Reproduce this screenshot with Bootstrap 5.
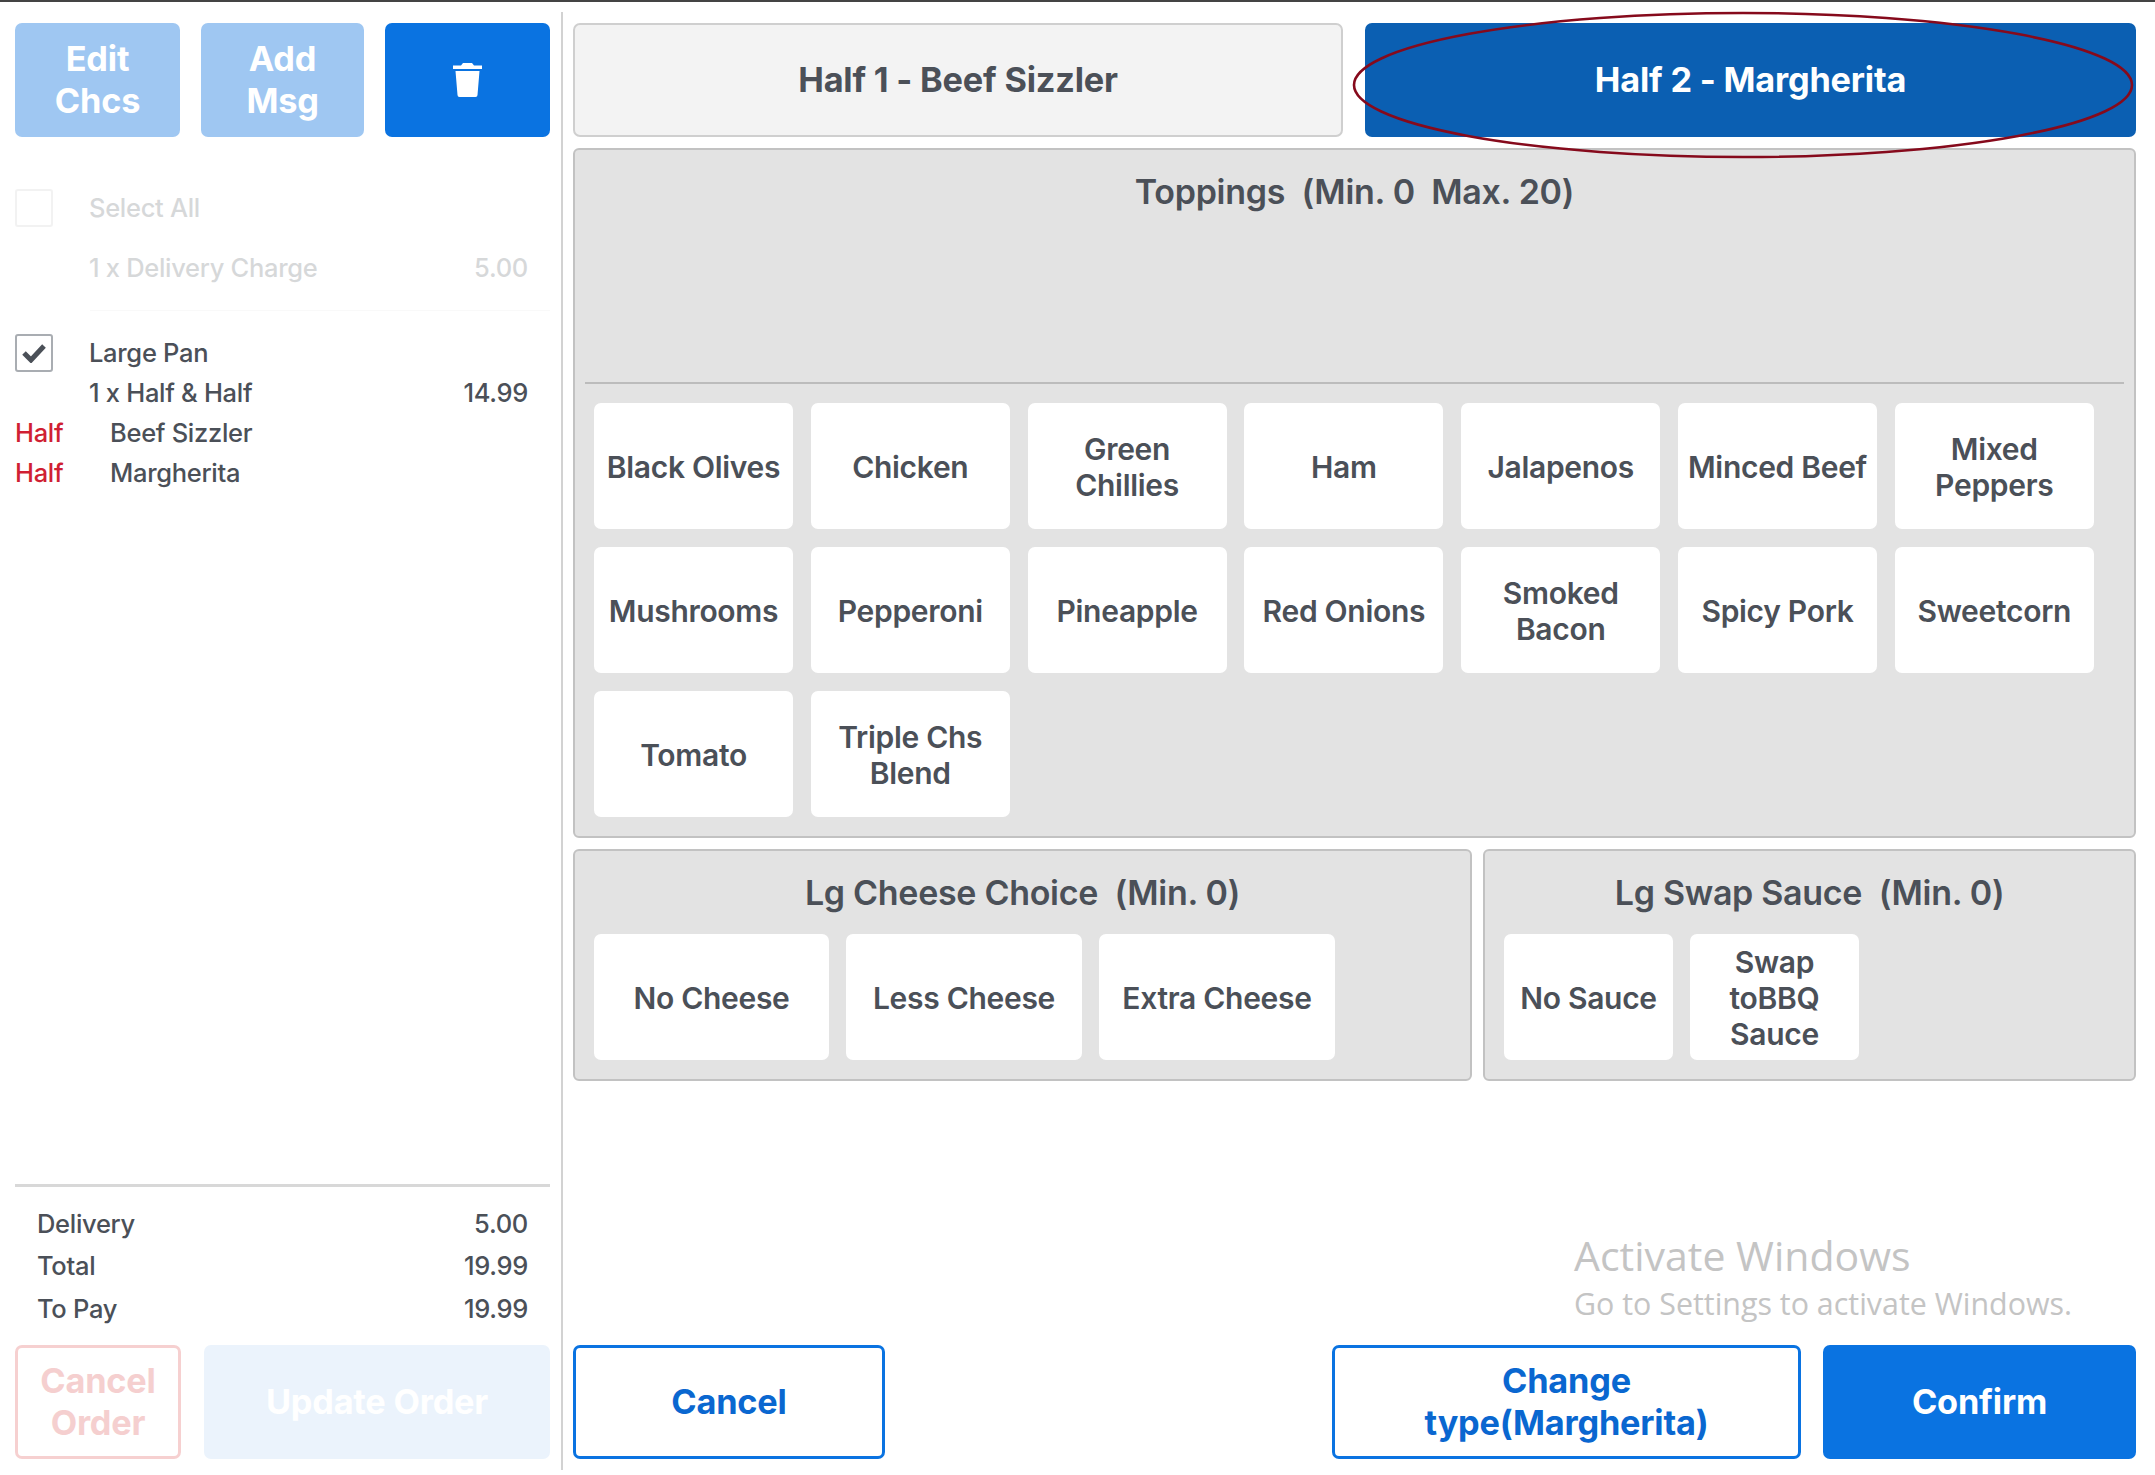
<!DOCTYPE html>
<html lang="en">
<head>
<meta charset="utf-8">
<title>Half and half</title>
<link href="https://cdn.jsdelivr.net/npm/bootstrap@5.3.0/dist/css/bootstrap.min.css" rel="stylesheet">
<style>
html,body{height:1475px;overflow:hidden}
body{font-family:Inter,"Liberation Sans",sans-serif;color:#4b5058;background:#fff;border-top:2px solid #444}
.shell{height:1473px;padding:10px 0 5px 0}
.side{width:563px;flex:none;padding:11px 11px 11px 15px;border-right:2px solid #d2d2d2}
.mainp{flex:1;padding:11px 19px 11px 10px;position:relative}
.pos-btn{font-family:Inter,sans-serif;font-weight:700;font-size:34.300px;line-height:42px;height:114px;border-radius:7px;padding:0 10px;display:flex;align-items:center;justify-content:center;text-align:center;letter-spacing:-.2px}
.b-blue{background:#0a73e1;border:0;color:#fff}
.b-light{background:#9fc7f2;border:0;color:#fff}
.b-outline{background:#fff;border:3px solid #0a73e1;color:#0a67d0}
.b-pale{background:#ebf3fc;border:0;color:#fff}
.b-danger-pale{background:#fff;border:3px solid #f6d0d0;color:#f5cfcf}
.b-half1{background:#f3f3f3;border:2px solid #cfcfcf;color:#4b5058}
.b-half2{background:#0b5fb2;border:0;color:#fff}
.w-edit{width:165px}.w-add{width:163px}.w-del{width:165px}
.t-row{font-size:25.5px;font-weight:500;line-height:40px;letter-spacing:-.3px}
.ghost{opacity:.22}
.chk{width:38px;height:38px;border:2px solid #a9adb2;border-radius:3px;flex:none;display:flex;align-items:center;justify-content:center;background:#fff}
.chk-off{border-color:#c8c8c8}
.red{color:#d01f33;width:95px;flex:none}
.rule-faint{height:1px;background:#f9f9f9;margin:0 0 0 75px}
.sum-rule{border-top:3px solid #d8d8d8}
.sum{padding:16px 22px 15px 22px}
.sum-row{font-size:25.5px;font-weight:500;line-height:42.5px;letter-spacing:-.3px}
.panel{background:#e3e3e3;border:2px solid #c2c2c2;border-radius:6px}
.p-top{height:690px;padding:0 10px}
.p-head{height:234px;border-bottom:2px solid #bcbcbc}
.p-title{font-size:34px;font-weight:600;line-height:42px;text-align:center;letter-spacing:-.3px;white-space:pre;padding-top:21px}
.tops{display:grid;grid-template-columns:repeat(7,199px);column-gap:17.8px;row-gap:18px;padding:19px 0 0 9px}
.tile{background:#fff;border:0;border-radius:7px;height:126px;font-weight:600;font-size:30px;line-height:36px;color:#4b5058;display:flex;align-items:center;justify-content:center;text-align:center;padding:2px 6px 0;letter-spacing:-.3px}
.p-lg{height:232px;padding:0 19px}
.tile-row{margin-top:20px;column-gap:17px}
.w-c1{width:235px}.w-c2{width:236px}.w-c3{width:236px}
.w-s{width:169px}
.ellipse{position:absolute;left:789px;top:-1px;width:782px;height:148px;pointer-events:none}
.wm{position:absolute;left:1011px;top:1219px;color:#c4c4c4;font-family:"Open Sans",sans-serif;white-space:nowrap}
.wm1{font-size:41px;line-height:49px}
.wm2{font-size:30.4px;line-height:38px;margin-top:5px}
.mt-list{margin-top:51px}
.sel-lbl{margin-left:36px}
.deliv{padding:0 22px 0 74px;margin-top:20px;margin-bottom:22px}
.lp{margin-top:22px}
.pr-line{padding:0 22px 0 74px}
.mt-gap1{margin-top:11px}
.mt-gap2{margin-top:11px}
</style>
</head>
<body>
<div class="shell d-flex">
  <aside class="side d-flex flex-column">
    <div class="d-flex justify-content-between">
      <button class="pos-btn b-light w-edit">Edit<br>Chcs</button>
      <button class="pos-btn b-light w-add">Add<br>Msg</button>
      <button class="pos-btn b-blue w-del" aria-label="Delete">
        <svg width="29" height="34" viewBox="0 0 29 34"><path fill="#fff" d="M10 0h9l2 2.500h8v3.500H0V2.500h8zM2.500 8h24l-2 24a2 2 0 0 1-2 2H6.500a2 2 0 0 1-2-2z"/></svg>
      </button>
    </div>
    <div class="ghost">
      <div class="d-flex align-items-center t-row mt-list"><span class="chk chk-off"></span><span class="sel-lbl">Select All</span></div>
      <div class="d-flex justify-content-between t-row deliv"><span>1 x Delivery Charge</span><span>5.00</span></div>
    </div>
    <div class="rule-faint"></div>
    <div class="d-flex align-items-center t-row lp"><span class="chk"><svg width="24" height="20" viewBox="0 0 24 20"><path d="M2 10l7 7L22 3" fill="none" stroke="#4b5058" stroke-width="5"/></svg></span><span class="sel-lbl">Large Pan</span></div>
    <div class="d-flex justify-content-between t-row pr-line"><span>1 x Half &amp; Half</span><span>14.99</span></div>
    <div class="d-flex t-row"><span class="red">Half</span><span>Beef Sizzler</span></div>
    <div class="d-flex t-row"><span class="red">Half</span><span>Margherita</span></div>
    <div class="mt-auto sum-rule sum">
      <div class="d-flex justify-content-between sum-row"><span>Delivery</span><span>5.00</span></div>
      <div class="d-flex justify-content-between sum-row"><span>Total</span><span>19.99</span></div>
      <div class="d-flex justify-content-between sum-row"><span>To Pay</span><span>19.99</span></div>
    </div>
    <div class="d-flex justify-content-between">
      <button class="pos-btn b-danger-pale" style="width:166px">Cancel<br>Order</button>
      <button class="pos-btn b-pale" style="width:346px">Update Order</button>
    </div>
  </aside>
  <main class="mainp d-flex flex-column">
    <svg class="ellipse" viewBox="0 0 782 148"><ellipse cx="391" cy="74" rx="389" ry="72" fill="none" stroke="#860a1c" stroke-width="2.6"/></svg>
    <div class="d-flex justify-content-between">
      <button class="pos-btn b-half1" style="width:770px">Half 1 - Beef Sizzler</button>
      <button class="pos-btn b-half2" style="width:771px">Half 2 - Margherita</button>
    </div>
    <section class="panel p-top mt-gap1">
      <div class="p-head"><div class="p-title">Toppings  (Min. 0  Max. 20)</div></div>
      <div class="tops">
        <div class="tile">Black Olives</div><div class="tile">Chicken</div><div class="tile">Green<br>Chillies</div><div class="tile">Ham</div><div class="tile">Jalapenos</div><div class="tile">Minced Beef</div><div class="tile">Mixed<br>Peppers</div>
        <div class="tile">Mushrooms</div><div class="tile">Pepperoni</div><div class="tile">Pineapple</div><div class="tile">Red Onions</div><div class="tile">Smoked<br>Bacon</div><div class="tile">Spicy Pork</div><div class="tile">Sweetcorn</div>
        <div class="tile">Tomato</div><div class="tile">Triple Chs<br>Blend</div>
      </div>
    </section>
    <div class="d-flex justify-content-between mt-gap2">
      <section class="panel p-lg" style="width:899px">
        <div class="p-title">Lg Cheese Choice  (Min. 0)</div>
        <div class="d-flex tile-row">
          <div class="tile w-c1">No Cheese</div><div class="tile w-c2">Less Cheese</div><div class="tile w-c3">Extra Cheese</div>
        </div>
      </section>
      <section class="panel p-lg" style="width:653px">
        <div class="p-title">Lg Swap Sauce  (Min. 0)</div>
        <div class="d-flex tile-row">
          <div class="tile w-s">No Sauce</div><div class="tile w-s">Swap<br>toBBQ<br>Sauce</div>
        </div>
      </section>
    </div>
    <div class="d-flex mt-auto">
      <button class="pos-btn b-outline" style="width:312px">Cancel</button>
      <button class="pos-btn b-outline ms-auto" style="width:469px">Change<br>type(Margherita)</button>
      <button class="pos-btn b-blue" style="width:313px;margin-left:22px">Confirm</button>
    </div>
    <div class="wm"><div class="wm1">Activate Windows</div><div class="wm2">Go to Settings to activate Windows.</div></div>
  </main>
</div>
<script src="https://cdn.jsdelivr.net/npm/bootstrap@5.3.0/dist/js/bootstrap.bundle.min.js"></script>
</body>
</html>
